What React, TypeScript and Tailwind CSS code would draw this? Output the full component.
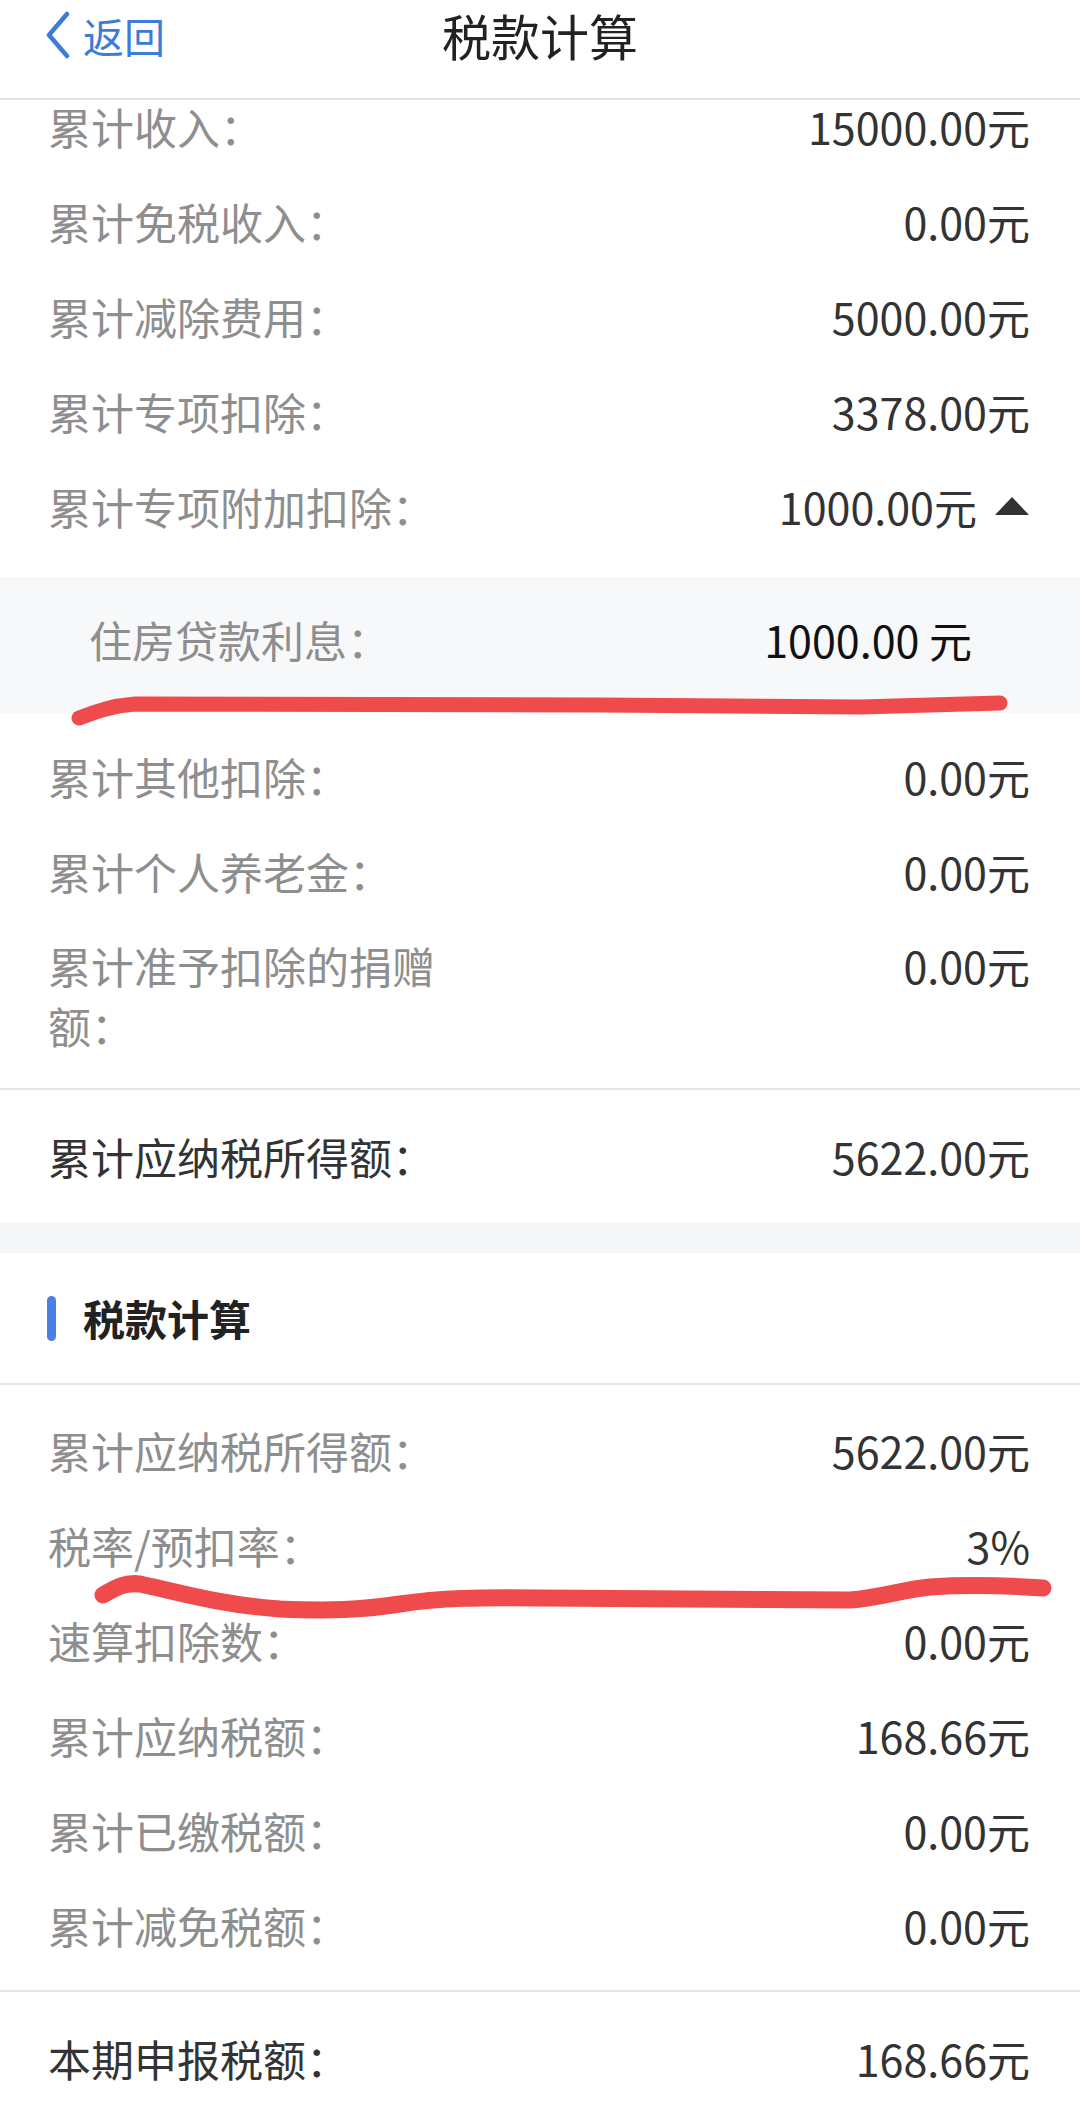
import React from "react";

type RowProps = {
  label: string;
  value: string;
  strong?: boolean;
  arrow?: boolean;
  className?: string;
};

function Row({ label, value, strong, arrow, className = "h-[95px] items-center" }: RowProps) {
  return (
    <div className={`flex justify-between pl-[48px] pr-[50px] ${className}`}>
      <span className={`w-[400px] leading-[60px] ${strong ? "text-[#333333]" : "text-[#8e8e8e]"}`}>{label}</span>
      <span className="flex items-center leading-[60px] text-[#333333]">
        {value}
        {arrow && (
          <svg width="36" height="20" viewBox="0 0 36 20" className="ml-[17px]">
            <polygon points="18,1 35,19 1,19" fill="#333333" />
          </svg>
        )}
      </span>
    </div>
  );
}

const topRows = [
  { label: "累计免税收入：", value: "0.00元" },
  { label: "累计减除费用：", value: "5000.00元" },
  { label: "累计专项扣除：", value: "3378.00元" },
];

const taxRows = [
  { label: "累计应纳税所得额：", value: "5622.00元" },
  { label: "税率/预扣率：", value: "3%" },
  { label: "速算扣除数：", value: "0.00元" },
  { label: "累计应纳税额：", value: "168.66元" },
  { label: "累计已缴税额：", value: "0.00元" },
  { label: "累计减免税额：", value: "0.00元" },
];

export default function App() {
  return (
    <div className="relative min-h-[2109px] overflow-hidden bg-white text-[43px] font-['Noto_Sans_CJK_SC','Noto_Sans',sans-serif]">
      {/* Nav bar */}
      <div className="h-[100px] border-b-2 border-[#e3e3e3] bg-white">
        <div className="grid h-[70px] grid-cols-[1fr_auto_1fr] items-center">
          <div className="flex items-center pl-[45px] text-[#3d7bd9]">
            <svg width="26" height="48" viewBox="0 0 26 48" fill="none">
              <path d="M22 3 L4 24 L22 45" stroke="#3d7bd9" strokeWidth="4.5" strokeLinecap="round" strokeLinejoin="round" />
            </svg>
            <span className="ml-[12px] text-[41px] leading-[60px]">返回</span>
          </div>
          <span className="text-[49px] leading-[70px] text-[#222222]">税款计算</span>
          <div />
        </div>
      </div>

      {/* Income section */}
      <Row label="累计收入：" value="15000.00元" className="h-[73px] pb-[22px] items-center" />
      {topRows.map((r) => (
        <Row key={r.label} label={r.label} value={r.value} />
      ))}
      <Row label="累计专项附加扣除：" value="1000.00元" arrow />
      <div className="h-[24px]" />
      <div className="flex h-[136px] items-center justify-between bg-[#f7f8fa] pb-[12px] pl-[89px] pr-[108px]">
        <span className="leading-[60px] text-[#8e8e8e]">住房贷款利息：</span>
        <span className="leading-[60px] text-[#111111]">1000.00 元</span>
      </div>
      <div className="h-[15px]" />
      <Row label="累计其他扣除：" value="0.00元" />
      <Row label="累计个人养老金：" value="0.00元" />
      <Row label="累计准予扣除的捐赠额：" value="0.00元" className="items-start pt-[17px] pb-[33px]" />
      <div className="h-[2px] bg-[#e6e6e6]" />
      <Row label="累计应纳税所得额：" value="5622.00元" strong className="h-[132px] items-center" />

      <div className="h-[31px] bg-[#f5f6f8]" />

      {/* Tax section */}
      <div className="flex h-[130px] items-center pl-[47px]">
        <div className="h-[45px] w-[9px] rounded-full bg-[#4a80e6]" />
        <span className="ml-[27px] font-bold leading-[60px] text-[#222222] text-[42px]">税款计算</span>
      </div>
      <div className="h-[2px] bg-[#e6e6e6]" />
      <div className="pt-[17px] pb-[18px]">
        {taxRows.map((r) => (
          <Row key={r.label} label={r.label} value={r.value} />
        ))}
      </div>
      <div className="h-[2px] bg-[#e6e6e6]" />
      <Row label="本期申报税额：" value="168.66元" strong className="h-[132px] items-center" />

      {/* Hand-drawn red marks over the screenshot */}
      <svg
        className="pointer-events-none absolute left-0 top-0"
        width="1080"
        height="2109"
        viewBox="0 0 1080 2109"
        fill="none"
      >
        <path
          d="M79 718 C 95 712, 110 706, 135 704 L 600 705 L 860 707 L 1000 703"
          stroke="#ef4b4d"
          strokeWidth="15"
          strokeLinecap="round"
          strokeLinejoin="round"
        />
        <path
          d="M103 1595 C 115 1588, 125 1582, 140 1584 C 170 1590, 220 1605, 280 1609 C 330 1611, 360 1610, 400 1604 C 440 1598, 480 1597, 540 1598 L 850 1600 C 880 1598, 900 1590, 930 1587 C 960 1585, 1000 1585, 1043 1588"
          stroke="#ef4b4d"
          strokeWidth="17"
          strokeLinecap="round"
          strokeLinejoin="round"
        />
      </svg>
    </div>
  );
}
